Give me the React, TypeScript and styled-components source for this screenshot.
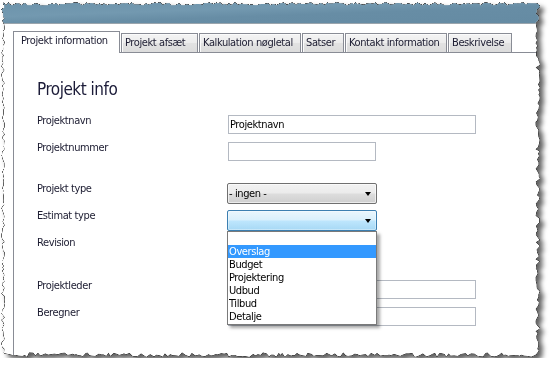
import React from "react";
import styled, { createGlobalStyle } from "styled-components";

const Global = createGlobalStyle`
  html, body { margin: 0; padding: 0; background: #ffffff; }
  body {
    font-family: "DejaVu Sans Condensed", "DejaVu Sans", "Liberation Sans", sans-serif;
    font-size: 11px;
    letter-spacing: -0.4px;
    color: #1b1b30;
  }
`;

const FW = 541;
const FH = 358;

function makeClip(): string {
  let seed = 12345;
  const rnd = () => {
    seed = (seed * 16807) % 2147483647;
    return (seed - 1) / 2147483646;
  };
  const pts: string[] = [];
  const p = (x: number, y: number) => pts.push(`${x.toFixed(1)}px ${y.toFixed(1)}px`);
  for (let x = 3; x < FW - 5; x += 1.5 + rnd() * 2.5) p(x, 2.5 + rnd() * 3);
  for (let y = 4; y < FH - 5; y += 1.5 + rnd() * 2.5) p(FW - 1 - rnd() * 4.5, y);
  for (let x = FW - 5; x > 3; x -= 1.5 + rnd() * 2.5) p(x, FH - 1 - rnd() * 4.5);
  for (let y = FH - 5; y > 4; y -= 1.5 + rnd() * 2.5) p(1.5 + rnd() * 3.5, y);
  return `polygon(${pts.join(", ")})`;
}

const clipPath = makeClip();

const Shadow = styled.div`
  width: ${FW}px;
  height: ${FH}px;
  filter: drop-shadow(0 0 0.5px rgba(0, 0, 0, 1)) drop-shadow(0 0 0.4px rgba(0, 0, 0, 1))
    drop-shadow(0 0 0.3px rgba(0, 0, 0, 0.9)) drop-shadow(4px 4px 2.5px rgba(0, 0, 0, 0.62));
`;

const Frame = styled.div`
  width: ${FW}px;
  height: ${FH}px;
  background: #ffffff;
  display: flex;
  flex-direction: column;
  overflow: hidden;
`;

const TitleBand = styled.div`
  height: 23px;
  flex: none;
  background: linear-gradient(178deg, #6b92aa 0%, #7399b0 40%, #678da5 60%, #658ba3 100%);
  border-bottom: 1px solid #9aa5ad;
`;

const Body = styled.div`
  flex: 1;
  display: flex;
  flex-direction: column;
  padding: 7px 0 0 13px;
`;

const TabStrip = styled.div`
  display: flex;
  align-items: flex-end;
  height: 22px;
  margin-bottom: -1px;
  position: relative;
  z-index: 1;
`;

const Tab = styled.div<{ $active?: boolean; $w: number }>`
  box-sizing: border-box;
  width: ${(p) => p.$w}px;
  flex: none;
  border: 1px solid #898c95;
  border-bottom: none;
  line-height: 14px;
  white-space: nowrap;
  overflow: hidden;
  color: #1b1b30;
  ${(p) =>
    p.$active
      ? `
    height: 22px;
    background: #ffffff;
    padding: 2px 0 0 7px;
  `
      : `
    height: 19px;
    margin-bottom: 1px;
    margin-left: 1px;
    background: linear-gradient(180deg, #f4f4f4 0%, #ececec 50%, #e2e2e2 51%, #dcdcdc 100%);
    box-shadow: inset 1px 1px 0 #fbfbfb;
    padding: 2px 0 0 3px;
  `}
`;

const Panel = styled.div`
  flex: 1;
  border-top: 1px solid #898c95;
  border-left: 1px solid #898c95;
  padding: 26px 0 0 23px;
  display: flex;
  flex-direction: column;
`;

const Heading = styled.h1`
  margin: 0;
  font-size: 17px;
  line-height: 20px;
  font-weight: normal;
  letter-spacing: -0.5px;
  color: #1b1b38;
`;

const Row = styled.div<{ $mt: number; $h: number }>`
  display: flex;
  align-items: flex-start;
  margin-top: ${(p) => p.$mt}px;
  height: ${(p) => p.$h}px;
`;

const Label = styled.div`
  width: 191px;
  flex: none;
  line-height: 14px;
  margin-top: -1px;
  color: #1b1b30;
`;

const TextInput = styled.input<{ $w: number }>`
  box-sizing: border-box;
  width: ${(p) => p.$w}px;
  height: 19px;
  margin: 0;
  border: 1px solid #b4b9c2;
  padding: 0 1px;
  font: inherit;
  letter-spacing: inherit;
  color: #000000;
  background: #ffffff;
  outline: none;
`;

const SelectWrap = styled.div`
  position: relative;
  margin-left: -1px;
`;

const SelectBox = styled.div<{ $open?: boolean }>`
  box-sizing: border-box;
  width: 150px;
  height: 21px;
  border-radius: 2px;
  display: flex;
  align-items: center;
  justify-content: space-between;
  padding: 0 5px 0 1px;
  color: #000000;
  border: 1px solid ${(p) => (p.$open ? "#3c7fb1" : "#707070")};
  background: ${(p) =>
    p.$open
      ? "linear-gradient(180deg, #eaf6fd 0%, #d9f0fc 48%, #bee6fd 52%, #a7d9f5 100%)"
      : "linear-gradient(180deg, #f2f2f2 0%, #ebebeb 48%, #dddddd 52%, #cfcfcf 100%)"};
  box-shadow: inset 0 0 0 1px ${(p) => (p.$open ? "rgba(255,255,255,0.35)" : "rgba(255,255,255,0.6)")};
`;

const Arrow = styled.span`
  width: 0;
  height: 0;
  border-left: 3.5px solid transparent;
  border-right: 3.5px solid transparent;
  border-top: 4px solid #000000;
  margin-top: 1px;
`;

const DropList = styled.ul`
  position: absolute;
  top: 100%;
  left: 0;
  z-index: 2;
  box-sizing: border-box;
  width: 150px;
  height: 94px;
  margin: 0;
  padding: 0;
  list-style: none;
  background: #ffffff;
  border: 1px solid #7a7a7a;
  box-shadow: 3px 3px 3px rgba(0, 0, 0, 0.35);
`;

const DropItem = styled.li<{ $selected?: boolean }>`
  height: 13px;
  line-height: 13px;
  padding-left: 1px;
  white-space: nowrap;
  background: ${(p) => (p.$selected ? "#3399ff" : "transparent")};
  color: ${(p) => (p.$selected ? "#ffffff" : "#000000")};
`;

const tabs = [
  { label: "Projekt afsæt", w: 77 },
  { label: "Kalkulation nøgletal", w: 102 },
  { label: "Satser", w: 42 },
  { label: "Kontakt information", w: 102 },
  { label: "Beskrivelse", w: 64 },
];

const options = ["", "Overslag", "Budget", "Projektering", "Udbud", "Tilbud", "Detalje"];

export default function App() {
  return (
    <>
      <Global />
      <Shadow>
        <Frame style={{ clipPath }}>
          <TitleBand />
          <Body>
            <TabStrip>
              <Tab $active $w={107}>Projekt information</Tab>
              {tabs.map((t) => (
                <Tab key={t.label} $w={t.w}>
                  {t.label}
                </Tab>
              ))}
            </TabStrip>
            <Panel>
              <Heading>Projekt info</Heading>
              <Row $mt={16} $h={19}>
                <Label>Projektnavn</Label>
                <TextInput $w={248} readOnly value="Projektnavn" />
              </Row>
              <Row $mt={8} $h={19}>
                <Label>Projektnummer</Label>
                <TextInput $w={148} readOnly value="" />
              </Row>
              <Row $mt={22} $h={21}>
                <Label>Projekt type</Label>
                <SelectWrap>
                  <SelectBox>
                    <span>- ingen -</span>
                    <Arrow />
                  </SelectBox>
                </SelectWrap>
              </Row>
              <Row $mt={6} $h={21}>
                <Label>Estimat type</Label>
                <SelectWrap>
                  <SelectBox $open>
                    <span />
                    <Arrow />
                  </SelectBox>
                  <DropList>
                    {options.map((o, i) => (
                      <DropItem key={i} $selected={o === "Overslag"}>
                        {o}
                      </DropItem>
                    ))}
                  </DropList>
                </SelectWrap>
              </Row>
              <Row $mt={6} $h={19}>
                <Label>Revision</Label>
              </Row>
              <Row $mt={24} $h={19}>
                <Label>Projektleder</Label>
                <TextInput $w={248} readOnly value="" />
              </Row>
              <Row $mt={8} $h={19}>
                <Label>Beregner</Label>
                <TextInput $w={248} readOnly value="" />
              </Row>
            </Panel>
          </Body>
        </Frame>
      </Shadow>
    </>
  );
}
